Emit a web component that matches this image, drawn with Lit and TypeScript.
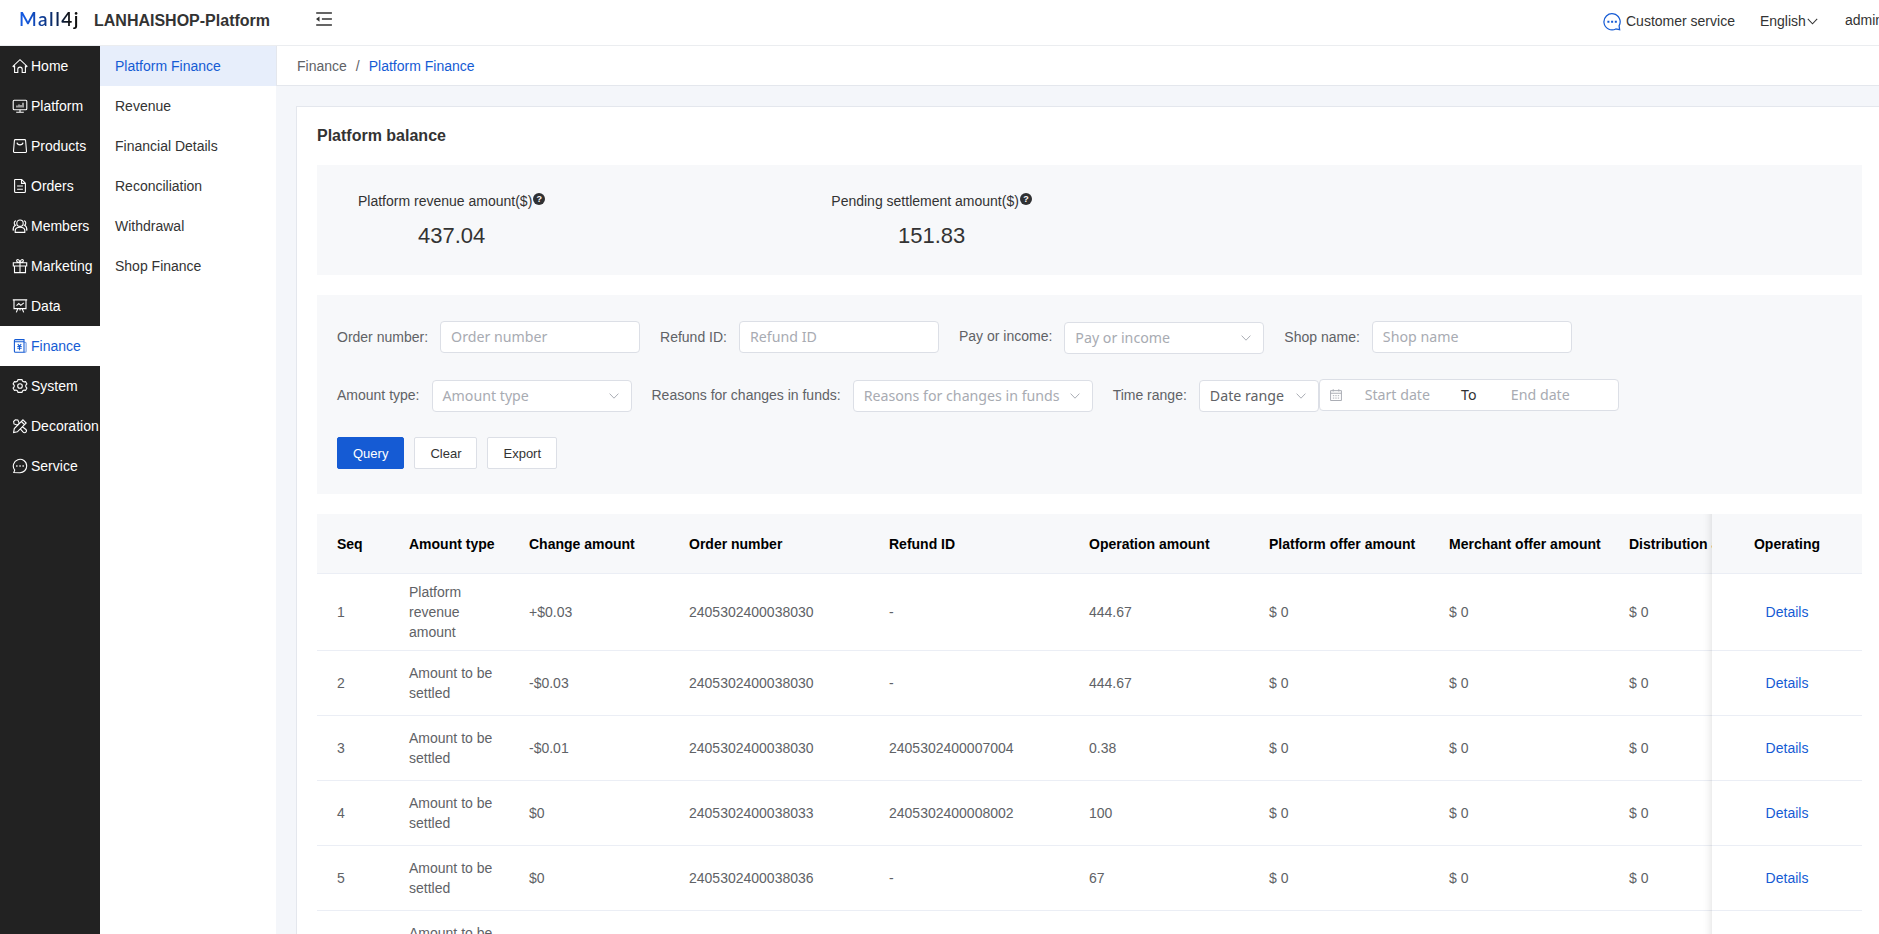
import { css, html, svg, LitElement, TemplateResult } from "lit";
import { customElement, property, state } from "lit/decorators.js";
import { classMap } from "lit/directives/class-map.js";

const icons: Record<string, TemplateResult> = {
  home: svg`<path d="M1.8 9.2 1 8.2 8 1.7l7 6.5-.8 1M2.6 7.6v6.9h3.2v-3.2a2.2 2.2 0 0 1 4.4 0v3.2h3.2V7.6"/>`,
  platform: svg`<rect x="1.2" y="2.3" width="13.6" height="9.4" rx="1"/><path d="M8 11.7v2.4M4.2 14.3h7.6M5 9.4V7.6M7 9.4V6.4M9 9.4V7M11 9.4V4.8"/>`,
  products: svg`<path d="M3.4 1.6h9.2a1 1 0 0 1 1 .9l.9 10.7a1.2 1.2 0 0 1-1.2 1.3H2.7a1.2 1.2 0 0 1-1.2-1.3l.9-10.7a1 1 0 0 1 1-.9z"/><path d="M5 4.6c.4 3 5.6 3 6 0"/>`,
  orders: svg`<path d="M3.1 1.5h6.6l3.7 3.7v8.3a1 1 0 0 1-1 1H3.6a1 1 0 0 1-1-1V2a.5.5 0 0 1 .5-.5zM9.5 1.6v3.8h3.8M5.1 8h5.8M5.1 11.3h5.8"/>`,
  members: svg`<circle cx="8" cy="5.2" r="3.2"/><path d="M3.2 14.4v-1.6C3.2 8 12.8 8 12.8 12.8v1.6zM4 2.8C1.8 3.2 1.7 6.2 3.4 7.2 1.8 8 1.1 9.5 1.1 12h1M12 2.8c2.2.4 2.3 3.4.6 4.4 1.6.8 2.3 2.3 2.3 4.8h-1"/>`,
  marketing: svg`<path d="M1.3 4.7h13.4V8H1.3zM2.5 8v6.6h11V8M8 4.7v9.9M8 4.5C5.5 4.5 4 3.3 4.8 2.1 5.8.8 7.7 2 8 4.5c.3-2.5 2.2-3.7 3.2-2.4.8 1.2-.7 2.4-3.2 2.4"/>`,
  data: svg`<path d="M.8 1.9h14.4M2 2v8.600h12V2M4.500 7.600l2.300-2 2 1.700 3-2.500M5.800 10.800l-1.500 3.600M10.200 10.800l1.500 3.600M8 10.800v1.600"/>`,
  finance: svg`<path d="M2.4 2.7v10.600a1 1 0 0 0 1 1h8.600V3.700H3.400a1 1 0 1 1 0-2.100h8.600v2"/><path d="M12 4.200h1.100a1 1 0 0 1 1 1v8.100a1 1 0 0 1-1 1H12" opacity=".6"/><path d="M5.800 6.200l1.700 2 1.700-2M5.300 8.500h4.400M5.300 10.300h4.400M7.500 8.300v4"/>`,
  system: svg`<path d="M6 1.600h4l.5 1.500 1.500.8 1.600-.3 1.300 2.300L13.800 7.100v1.800l1.100 1.200-1.300 2.300-1.600-.3-1.500.8-.5 1.500H6l-.5-1.500-1.500-.8-1.600.3-1.300-2.300 1.100-1.200V7.100L1.100 5.900l1.300-2.300 1.600.3 1.500-.8z"/><circle cx="8" cy="8" r="2.300"/>`,
  decoration: svg`<path d="M11 1.800 14.200 5 5.400 13.800l-3.800.7.700-3.900zM9.300 3.500l3.200 3.200"/><path d="M6.200 6.600 4.900 7 2 5.900 1.600 3.500 3.300 1.800 5.800 2 7 4.600l-.2 1.300M10.300 8.800l3.600 2.700a1.900 1.900 0 0 1-2.700 2.700L8.300 10.900"/>`,
  service: svg`<path d="M14.700 8a6.700 6.700 0 1 0-12 4.100l-.9 2.400 6.200.2A6.700 6.700 0 0 0 14.700 8z"/><path d="M4.200 8h1.300M7.400 8h1.300M10.500 8h1.300" stroke-width="1.500"/>`,
  chat: svg`<path d="M14.300 11.400A7.200 7.200 0 1 0 11.400 14.200l3.400.6z"/><path d="M3.900 7.800h1.800M7.200 7.800H9M10.500 7.800h1.800" stroke-width="1.800"/>`,
  fold: svg`<path d="M.2 2.100h15.700M5.900 8.100h10M.2 14h15.700" stroke-width="1.500"/><path d="M0 8.100 3.500 5.400v5.400z" fill="currentColor" stroke="none"/>`,
  arrow: svg`<path d="M3 5.300l5 5.200 5-5.200"/>`,
  calendar: svg`<path d="M1.800 3h12.400v11.300H1.800zM1.800 6h12.400M4.800 1.400V4M11.200 1.400V4M4.400 8.800H6M7.200 8.800h1.600M10 8.800h1.600M4.400 11.500H6M7.200 11.500h1.600M10 11.500h1.600"/>`,
};

@customElement("mall-icon")
class MallIcon extends LitElement {
  static styles = css`
    :host {
      display: block;
      flex: none;
      width: 16px;
      height: 16px;
    }

    svg {
      display: block;
      width: 100%;
      height: 100%;
      fill: none;
      stroke: currentColor;
      stroke-width: 1.1;
    }
  `;

  @property() icon = "";

  render() {
    return html`<svg viewBox="0 0 16 16" aria-hidden="true">${icons[this.icon]}</svg>`;
  }
}

@customElement("mall-select")
class MallSelect extends LitElement {
  static styles = css`
    :host {
      display: flex;
      box-sizing: border-box;
      flex: none;
      align-items: center;
      justify-content: space-between;
      width: 200px;
      height: 32px;
      margin-top: 1px;
      padding: 0 10px;
      border: 1px solid #dcdfe6;
      border-radius: 4px;
      background: #fff;
      color: #a8abb2;
      font: 14.2px/30px "Noto Sans", sans-serif;
      white-space: nowrap;
    }

    :host([filled]) {
      color: #606266;
    }

    mall-icon {
      width: 14px;
      height: 14px;
      color: #a8abb2;
    }
  `;

  @property() label = "";

  render() {
    return html`<span>${this.label}</span><mall-icon icon="arrow"></mall-icon>`;
  }
}

const menus = [
  ["home", "Home"],
  ["platform", "Platform"],
  ["products", "Products"],
  ["orders", "Orders"],
  ["members", "Members"],
  ["marketing", "Marketing"],
  ["data", "Data"],
  ["finance", "Finance"],
  ["system", "System"],
  ["decoration", "Decoration"],
  ["service", "Service"],
];

const subMenus = [
  "Platform Finance",
  "Revenue",
  "Financial Details",
  "Reconciliation",
  "Withdrawal",
  "Shop Finance",
];

const columns = [
  "Seq",
  "Amount type",
  "Change amount",
  "Order number",
  "Refund ID",
  "Operation amount",
  "Platform offer amount",
  "Merchant offer amount",
  "Distribution amount",
];

const rows = [
  ["1", "Platform revenue amount", "+$0.03", "2405302400038030", "-", "444.67", "$ 0", "$ 0", "$ 0"],
  ["2", "Amount to be settled", "-$0.03", "2405302400038030", "-", "444.67", "$ 0", "$ 0", "$ 0"],
  ["3", "Amount to be settled", "-$0.01", "2405302400038030", "2405302400007004", "0.38", "$ 0", "$ 0", "$ 0"],
  ["4", "Amount to be settled", "$0", "2405302400038033", "2405302400008002", "100", "$ 0", "$ 0", "$ 0"],
  ["5", "Amount to be settled", "$0", "2405302400038036", "-", "67", "$ 0", "$ 0", "$ 0"],
  ["6", "Amount to be settled", "$0", "2405302400038036", "-", "67", "$ 0", "$ 0", "$ 0"],
];

@customElement("app-root")
class AppRoot extends LitElement {
  static styles = css`
    :host {
      display: flex;
      flex-direction: column;
      height: 100vh;
      overflow: hidden;
      background: #fff;
      color: #333;
      font: 14px/20px "Liberation Sans", Arial, sans-serif;
    }

    header {
      display: flex;
      flex: none;
      box-sizing: border-box;
      height: 46px;
      border-bottom: 1px solid #ebedf0;
    }

    .logo {
      width: 75px;
      padding: 7px 0 0 19px;
      background: linear-gradient(90deg, #1459e0 25px, #0a2454 58px, #111 70px);
      background-clip: text;
      -webkit-background-clip: text;
      color: transparent;
      font: 600 19px/24px Lato, sans-serif;
      letter-spacing: 1.5px;
    }

    .title {
      flex: 1;
      display: flex;
      gap: 46px;
      padding-top: 11px;
      font-size: 16px;
      font-weight: bold;
    }

    .user {
      display: flex;
      flex: none;
      width: 277px;
      overflow: hidden;
      padding-top: 11px;
      white-space: nowrap;
    }

    .user span {
      flex: none;
    }

    .user mall-icon {
      width: 18px;
      height: 18px;
      margin: 2px 5px 0 1px;
      color: #155bd4;
    }

    .user .lang {
      display: flex;
      width: 85px;
      margin-left: 25px;
    }

    .user .lang mall-icon {
      width: 15px;
      height: 15px;
      margin: 3px 0 0 -1px;
      color: #333;
    }

    .name {
      margin-top: -1px;
    }

    .body {
      display: flex;
      flex: 1;
      min-height: 0;
    }

    nav {
      flex: none;
      width: 100px;
      background: #222;
      color: #fff;
    }

    .menu {
      display: flex;
      align-items: center;
      gap: 3px;
      height: 40px;
      padding-left: 12px;
      white-space: nowrap;
    }

    .menu.active {
      background: #fff;
      color: #155bd4;
    }

    .sub {
      flex: none;
      width: 176px;
    }

    .sub div {
      height: 40px;
      padding-left: 15px;
      line-height: 40px;
    }

    .sub .active {
      background: #e7eefb;
      color: #155bd4;
    }

    main {
      flex: 1;
      min-width: 0;
      overflow: hidden;
      background: #f4f6fa;
    }

    .crumbs {
      display: flex;
      gap: 9px;
      box-sizing: border-box;
      height: 40px;
      padding-left: 20px;
      border-left: 1px solid #e4e7ed;
      border-bottom: 1px solid #e4e7ed;
      background: #fff;
      color: #606266;
      line-height: 40px;
    }

    .crumbs a,
    .fixed a {
      color: #155bd4;
    }

    .card {
      box-sizing: border-box;
      width: 1587px;
      margin: 20px 0 0 20px;
      padding: 19px 20px;
      border: 1px solid #e4e7ed;
      background: #fff;
    }

    h3 {
      margin: 0 0 19px;
      font-size: 16px;
      line-height: 20px;
    }

    .stats {
      display: flex;
      gap: 286px;
      height: 110px;
      box-sizing: border-box;
      margin-bottom: 20px;
      padding: 26px 41px 0;
      background: #f7f8fa;
      text-align: center;
    }

    .stat {
      display: flex;
      flex-direction: column;
      gap: 11px;
    }

    .stat .label {
      display: flex;
    }

    .help {
      width: 12px;
      height: 12px;
      margin: 2px 0 0 1px;
      border-radius: 50%;
      background: #303133;
      color: #fff;
      font-size: 9px;
      font-weight: bold;
      line-height: 12px;
    }

    .amount {
      font-size: 22px;
      line-height: 28px;
    }

    .search {
      display: flex;
      flex-direction: column;
      gap: 25px;
      margin-bottom: 20px;
      padding: 26px 20px 25px;
      background: #f7f8fa;
    }

    .line {
      display: flex;
      align-items: flex-start;
      gap: 20px;
      height: 33px;
      color: #606266;
      line-height: 32px;
    }

    .item {
      display: flex;
      white-space: nowrap;
    }

    .item label {
      padding-right: 12px;
    }

    .item .raised {
      margin-top: -1px;
    }

    .wide {
      width: 240px;
    }

    .narrow {
      width: 120px;
    }

    input {
      box-sizing: border-box;
      width: 200px;
      height: 32px;
      padding: 0 10px 1px;
      border: 1px solid #dcdfe6;
      border-radius: 4px;
      background: #fff;
      font: 14.2px "Noto Sans", sans-serif;
      outline: none;
    }

    input::placeholder {
      color: #a8abb2;
    }

    .dates {
      display: flex;
      align-items: center;
      box-sizing: border-box;
      width: 300px;
      height: 32px;
      padding: 0 10px 0 9px;
      border: 1px solid #dcdfe6;
      border-radius: 4px;
      background: #fff;
      color: #a8abb2;
      font: 14.2px/30px "Noto Sans", sans-serif;
    }

    .dates mall-icon {
      width: 14px;
      height: 14px;
    }

    .dates span {
      width: 109px;
      text-align: center;
    }

    .dates b {
      width: 34px;
      color: #303133;
      font-weight: normal;
      text-align: center;
    }

    .buttons {
      display: flex;
      gap: 10px;
    }

    button {
      height: 32px;
      padding: 0 15px;
      border: 1px solid #dcdfe6;
      border-radius: 2px;
      background: #fff;
      color: #333;
      font: 13px "Liberation Sans", Arial, sans-serif;
    }

    .primary {
      border-color: #155bd4;
      background: #155bd4;
      color: #fff;
    }

    .row {
      display: flex;
      box-sizing: border-box;
      min-height: 65px;
      border-bottom: 1px solid #ebeef5;
      color: #606266;
    }

    .row.head {
      min-height: 60px;
      background: #f7f8fa;
      color: #000;
      font-weight: bold;
      white-space: nowrap;
    }

    .cells {
      display: grid;
      flex: 1;
      min-width: 0;
      grid-template-columns: 80px 120px 160px 200px 200px 180px 180px 180px 180px;
      align-items: center;
      overflow: hidden;
    }

    .cells div {
      padding: 8px 12px;
    }

    .cells div:first-child {
      padding-left: 20px;
    }

    .fixed {
      position: relative;
      display: flex;
      flex: none;
      align-items: center;
      justify-content: center;
      width: 150px;
    }

    .fixed::before {
      content: "";
      position: absolute;
      top: 0;
      bottom: -1px;
      left: -10px;
      width: 10px;
      box-shadow: inset -10px 0 10px -10px rgba(0, 0, 0, 0.15);
    }
  `;

  @state() private _menu = "Finance";
  @state() private _subMenu = "Platform Finance";

  render() {
    return html`
      <header>
        <div class="logo">Mall4j</div>
        <div class="title">LANHAISHOP-Platform <mall-icon icon="fold"></mall-icon></div>
        <div class="user">
          <mall-icon icon="chat"></mall-icon>
          <span>Customer service</span>
          <span class="lang">English<mall-icon icon="arrow"></mall-icon></span>
          <span class="name">admin</span>
        </div>
      </header>
      <div class="body">
        <nav>
          ${menus.map(([icon, name]) => html`
            <div
              class=${classMap({ menu: true, active: name === this._menu })}
              @click=${() => (this._menu = name)}
            ><mall-icon icon=${icon}></mall-icon>${name}</div>
          `)}
        </nav>
        <div class="sub">
          ${subMenus.map((name) => html`
            <div
              class=${classMap({ active: name === this._subMenu })}
              @click=${() => (this._subMenu = name)}
            >${name}</div>
          `)}
        </div>
        <main>
          <div class="crumbs"><span>Finance</span><span>/</span><a>Platform Finance</a></div>
          <div class="card">
            <h3>Platform balance</h3>
            <div class="stats">
              ${this._stat("Platform revenue amount($)", "437.04")}
              ${this._stat("Pending settlement amount($)", "151.83")}
            </div>
            ${this._search()}
            ${this._table()}
          </div>
        </main>
      </div>
    `;
  }

  _stat(label: string, amount: string) {
    return html`
      <div class="stat">
        <div class="label">${label}<span class="help">?</span></div>
        <div class="amount">${amount}</div>
      </div>
    `;
  }

  _search() {
    return html`
      <div class="search">
        <div class="line">
          <div class="item"><label>Order number:</label><input placeholder="Order number"></div>
          <div class="item"><label>Refund ID:</label><input placeholder="Refund ID"></div>
          <div class="item">
            <label class="raised">Pay or income:</label><mall-select label="Pay or income"></mall-select>
          </div>
          <div class="item"><label>Shop name:</label><input placeholder="Shop name"></div>
        </div>
        <div class="line">
          <div class="item"><label>Amount type:</label><mall-select label="Amount type"></mall-select></div>
          <div class="item">
            <label>Reasons for changes in funds:</label>
            <mall-select class="wide" label="Reasons for changes in funds"></mall-select>
          </div>
          <div class="item">
            <label>Time range:</label>
            <mall-select class="narrow" filled label="Date range"></mall-select>
            <div class="dates">
              <mall-icon icon="calendar"></mall-icon>
              <span>Start date</span><b>To</b><span>End date</span>
            </div>
          </div>
        </div>
        <div class="buttons">
          <button class="primary">Query</button>
          <button>Clear</button>
          <button>Export</button>
        </div>
      </div>
    `;
  }

  _table() {
    return html`
      <div class="row head">
        <div class="cells">${columns.map((name) => html`<div>${name}</div>`)}</div>
        <div class="fixed">Operating</div>
      </div>
      ${rows.map((row) => html`
        <div class="row">
          <div class="cells">${row.map((value) => html`<div>${value}</div>`)}</div>
          <div class="fixed"><a>Details</a></div>
        </div>
      `)}
    `;
  }
}
